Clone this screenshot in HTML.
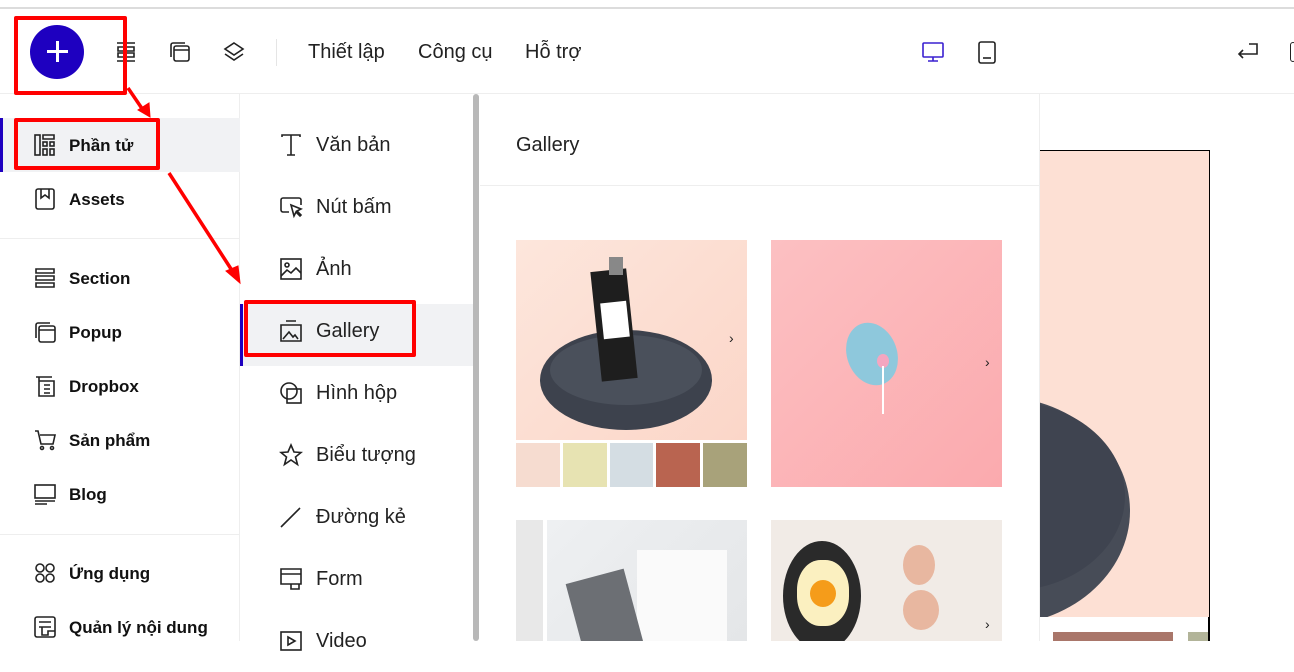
<!DOCTYPE html>
<html><head><meta charset="utf-8"><style>
*{box-sizing:border-box;margin:0;padding:0}
body{width:1294px;height:641px;overflow:hidden;background:#fff;font-family:"Liberation Sans",Roboto,sans-serif;color:#1f1f1f;position:relative}
.abs{position:absolute}
.topline{left:0;top:7px;width:1294px;height:2px;background:#dcdcdc}
.hdr{left:0;top:9px;width:1294px;height:85px;border-bottom:1px solid #eee}
.menu{font-size:20px;color:#222;top:41px}
.side{left:0;top:94px;width:240px;height:547px;border-right:1px solid #eee}
.si{position:absolute;left:0;width:240px;height:54px;display:flex;align-items:center;font-weight:bold;font-size:17px;color:#111}
.si svg{position:absolute;left:34px}
.si span{position:absolute;left:69px;top:18px}
.mi{position:absolute;left:240px;width:233px;height:62px;display:flex;align-items:center;font-size:20px;color:#222}
.mi svg{position:absolute;left:39px}
.mi span{position:absolute;left:76px;top:20px}
svg{fill:none;stroke:#222;stroke-width:1.6}
.red{position:absolute;border:4px solid #f00;border-radius:2px}
</style></head><body>
<div class="abs topline"></div>
<div class="abs hdr"></div>
<div class="abs" style="left:30px;top:25px;width:54px;height:54px;border-radius:50%;background:#1e00c0"></div>
<div class="abs" style="left:47px;top:50px;width:21px;height:3px;background:#fff"></div>
<div class="abs" style="left:56px;top:41px;width:3px;height:21px;background:#fff"></div>
<svg class="abs" style="left:114px;top:40px" width="24" height="24" viewBox="0 0 24 24"><path d="M3 3h18M3 21h18M4 7h16v4H4zM4 13h16v4H4z"/></svg>
<svg class="abs" style="left:168px;top:40px" width="24" height="24" viewBox="0 0 24 24"><rect x="6" y="6" width="15" height="15" rx="2"/><path d="M3 17V5a2 2 0 0 1 2-2h12M6 10h15"/></svg>
<svg class="abs" style="left:222px;top:40px" width="24" height="24" viewBox="0 0 24 24"><path d="M12 3l9 6-9 6-9-6zM3 14l9 6 9-6"/></svg>
<div class="abs" style="left:276px;top:39px;width:1px;height:27px;background:#e5e5e5"></div>
<div class="abs menu" style="left:308px">Thiết lập</div>
<div class="abs menu" style="left:418px">Công cụ</div>
<div class="abs menu" style="left:525px">Hỗ trợ</div>
<svg class="abs" style="left:921px;top:40px" width="24" height="24" viewBox="0 0 24 24"><rect x="2" y="3" width="20" height="14" rx="1" stroke="#3a20d0"/><path d="M12 17v4M7 21h10" stroke="#3a20d0"/></svg>
<svg class="abs" style="left:975px;top:40px" width="24" height="24" viewBox="0 0 24 24"><rect x="4" y="2" width="16" height="21" rx="2"/><path d="M8 18h8"/></svg>
<svg class="abs" style="left:1236px;top:40px" width="24" height="24" viewBox="0 0 24 24"><path d="M7 18l-4-4 4-4M3 14h18V4h-8"/></svg>
<div class="abs" style="left:1290px;top:42px;width:6px;height:20px;border:1.6px solid #222;border-radius:3px"></div>

<div class="abs side"></div>
<div class="abs" style="left:0;top:118px;width:240px;height:54px;background:#f1f2f4"></div>
<div class="abs" style="left:0;top:118px;width:3px;height:54px;background:#1e00c0"></div>
<div class="si" style="top:118px"><svg width="22" height="22" viewBox="0 0 22 22"><rect x="1" y="1" width="5" height="20"/><path d="M9 1h11v4H9z"/><rect x="9" y="8" width="4" height="4"/><rect x="16" y="8" width="4" height="4"/><rect x="9" y="15" width="4" height="6"/><rect x="16" y="15" width="4" height="6"/></svg><span>Phần tử</span></div>
<div class="si" style="top:172px"><svg width="22" height="22" viewBox="0 0 22 22"><rect x="2" y="1" width="18" height="20" rx="2"/><path d="M7 1v9l4-3 4 3V1"/></svg><span>Assets</span></div>
<div class="abs" style="left:0;top:238px;width:240px;height:1px;background:#eee"></div>
<div class="si" style="top:251px"><svg width="22" height="22" viewBox="0 0 22 22"><path d="M2 2h18v4H2zM2 9h18v4H2zM2 16h18v4H2z"/></svg><span>Section</span></div>
<div class="si" style="top:305px"><svg width="22" height="22" viewBox="0 0 22 22"><rect x="5" y="5" width="16" height="16" rx="2"/><path d="M2 17V4a2 2 0 0 1 2-2h12M5 9h16"/></svg><span>Popup</span></div>
<div class="si" style="top:359px"><svg width="22" height="22" viewBox="0 0 22 22"><path d="M2 2h16M5 2v19h15V6H5M10 10h6M10 14h6M10 18h6"/></svg><span>Dropbox</span></div>
<div class="si" style="top:413px"><svg width="22" height="22" viewBox="0 0 22 22"><path d="M1 2h3l3 13h12l2-9H6"/><circle cx="8" cy="19" r="1.5"/><circle cx="18" cy="19" r="1.5"/></svg><span>Sản phẩm</span></div>
<div class="si" style="top:467px"><svg width="22" height="22" viewBox="0 0 22 22"><rect x="1" y="2" width="20" height="13"/><path d="M1 18h20M1 21h12"/></svg><span>Blog</span></div>
<div class="abs" style="left:0;top:534px;width:240px;height:1px;background:#eee"></div>
<div class="si" style="top:546px"><svg width="22" height="22" viewBox="0 0 22 22"><circle cx="6" cy="6" r="4"/><circle cx="16" cy="6" r="4"/><circle cx="6" cy="16" r="4"/><circle cx="16" cy="16" r="4"/></svg><span>Ứng dụng</span></div>
<div class="si" style="top:600px"><svg width="22" height="22" viewBox="0 0 22 22"><rect x="1" y="1" width="20" height="20" rx="2"/><path d="M5 6h12M5 11h12M8 11v8h6v-4h7"/></svg><span>Quản lý nội dung</span></div>

<div class="abs" style="left:473px;top:94px;width:6px;height:547px;background:#b8b8b8;border-radius:3px"></div>
<div class="abs" style="left:240px;top:304px;width:233px;height:62px;background:#f1f2f4"></div>
<div class="abs" style="left:240px;top:304px;width:3px;height:62px;background:#1e00c0"></div>
<div class="mi" style="top:114px"><svg width="24" height="24" viewBox="0 0 24 24"><path d="M3 4V2h18v2M12 2v20M8 22h8"/></svg><span>Văn bản</span></div>
<div class="mi" style="top:176px"><svg width="24" height="24" viewBox="0 0 24 24"><path d="M10 17H4a2 2 0 0 1-2-2V5a2 2 0 0 1 2-2h16a2 2 0 0 1 2 2v5"/><path d="M12 10l3 11 2-4 4 4 1-1-4-4 4-2z"/></svg><span>Nút bấm</span></div>
<div class="mi" style="top:238px"><svg width="24" height="24" viewBox="0 0 24 24"><rect x="2" y="2" width="20" height="20"/><circle cx="8" cy="8" r="2"/><path d="M2 19l6-6 4 3 5-5 5 5"/></svg><span>Ảnh</span></div>
<div class="mi" style="top:300px"><svg width="24" height="24" viewBox="0 0 24 24"><path d="M7 2h10M2 6h20v16H2z"/><path d="M4 20l6-7 4 5 2-2 3 4"/></svg><span>Gallery</span></div>
<div class="mi" style="top:362px"><svg width="24" height="24" viewBox="0 0 24 24"><circle cx="10" cy="10" r="8"/><rect x="8" y="8" width="14" height="14"/></svg><span>Hình hộp</span></div>
<div class="mi" style="top:424px"><svg width="24" height="24" viewBox="0 0 24 24"><path d="M12 2l3 7 7 .5-5.5 4.5 2 7.5L12 17l-6.5 4.5 2-7.5L2 9.5 9 9z"/></svg><span>Biểu tượng</span></div>
<div class="mi" style="top:486px"><svg width="24" height="24" viewBox="0 0 24 24"><path d="M2 22L21 3"/></svg><span>Đường kẻ</span></div>
<div class="mi" style="top:548px"><svg width="24" height="24" viewBox="0 0 24 24"><path d="M2 2h20v15H2zM2 7h20M12 17h8v5h-8z"/></svg><span>Form</span></div>
<div class="mi" style="top:610px"><svg width="24" height="24" viewBox="0 0 24 24"><rect x="2" y="3" width="20" height="18"/><path d="M9 8l7 4-7 4z"/></svg><span>Video</span></div>

<div class="abs" style="left:516px;top:134px;font-size:20px;color:#222">Gallery</div>
<div class="abs" style="left:480px;top:185px;width:560px;height:1px;background:#eee"></div>
<div class="abs" style="left:1039px;top:94px;width:1px;height:547px;background:#eee"></div>

<!-- gallery 1 -->
<div class="abs" style="left:516px;top:240px;width:231px;height:200px;overflow:hidden;background:linear-gradient(135deg,#fde6dc,#fbd6c8)">
  <div class="abs" style="left:24px;top:90px;width:172px;height:100px;border-radius:50%;background:#3d424d"></div>
  <div class="abs" style="left:34px;top:95px;width:152px;height:70px;border-radius:50%;background:#4a505b"></div>
  <div class="abs" style="left:80px;top:30px;width:36px;height:110px;background:#1e1e1e;transform:rotate(-6deg)"></div>
  <div class="abs" style="left:93px;top:17px;width:14px;height:18px;background:#888"></div>
  <div class="abs" style="left:86px;top:62px;width:26px;height:36px;background:#fff;transform:rotate(-6deg)"></div>
</div>
<div class="abs" style="left:729px;top:330px;font-size:14px">›</div>
<div class="abs" style="left:516px;top:443px;width:44px;height:44px;background:#f6dcd0"></div>
<div class="abs" style="left:563px;top:443px;width:44px;height:44px;background:#e7e3b2"></div>
<div class="abs" style="left:610px;top:443px;width:43px;height:44px;background:#d4dde3"></div>
<div class="abs" style="left:656px;top:443px;width:44px;height:44px;background:#b96450"></div>
<div class="abs" style="left:703px;top:443px;width:44px;height:44px;background:#a8a27a"></div>

<!-- gallery 2 -->
<div class="abs" style="left:771px;top:240px;width:231px;height:247px;background:linear-gradient(135deg,#fcc0c2,#fbaaae)"></div>
<div class="abs" style="left:847px;top:322px;width:50px;height:64px;border-radius:50%;background:#8ec8dc;transform:rotate(-20deg)"></div>
<div class="abs" style="left:877px;top:354px;width:12px;height:14px;border-radius:50%;background:#f4a6c0"></div>
<div class="abs" style="left:882px;top:366px;width:2px;height:48px;background:#fff"></div>
<div class="abs" style="left:985px;top:354px;font-size:14px">›</div>

<!-- row 2 -->
<div class="abs" style="left:516px;top:520px;width:27px;height:121px;background:#e8e8e8"></div>
<div class="abs" style="left:547px;top:520px;width:200px;height:121px;overflow:hidden;background:linear-gradient(135deg,#eef0f2,#e4e6e8)">
  <div class="abs" style="left:90px;top:30px;width:90px;height:100px;background:#fafafa"></div>
  <div class="abs" style="left:28px;top:55px;width:60px;height:80px;background:#6c6f74;transform:rotate(-15deg)"></div>
</div>
<div class="abs" style="left:771px;top:520px;width:231px;height:121px;overflow:hidden;background:#f1ebe6">
  <div class="abs" style="left:12px;top:21px;width:78px;height:110px;border-radius:50%;background:#2a2a2a"></div>
  <div class="abs" style="left:26px;top:40px;width:52px;height:66px;border-radius:45%;background:#fbf0c0"></div>
  <div class="abs" style="left:39px;top:60px;width:26px;height:27px;border-radius:50%;background:#f59c1a"></div>
  <div class="abs" style="left:132px;top:25px;width:32px;height:40px;border-radius:50%;background:#e8b7a0"></div>
  <div class="abs" style="left:132px;top:70px;width:36px;height:40px;border-radius:50%;background:#e8b7a0"></div>
</div>
<div class="abs" style="left:985px;top:616px;font-size:14px">›</div>

<!-- canvas -->
<div class="abs" style="left:1040px;top:150px;width:170px;height:467px;overflow:hidden;background:#fde0d4;border-top:1px solid #000;border-right:1.5px solid #000">
  <div class="abs" style="left:-180px;top:245px;width:270px;height:230px;border-radius:50%;background:#474c57"></div>
  <div class="abs" style="left:-150px;top:250px;width:235px;height:190px;border-radius:50%;background:#3f4450"></div>
</div>
<div class="abs" style="left:1208px;top:617px;width:2px;height:24px;background:#000"></div>
<div class="abs" style="left:1053px;top:632px;width:120px;height:9px;background:#a9766a"></div>
<div class="abs" style="left:1188px;top:632px;width:20px;height:9px;background:#b2b499"></div>

<!-- annotations -->
<div class="red" style="left:14px;top:16px;width:113px;height:79px"></div>
<div class="red" style="left:14px;top:118px;width:146px;height:52px"></div>
<div class="red" style="left:244px;top:300px;width:172px;height:57px"></div>
<svg class="abs" style="left:0;top:0" width="300" height="300" viewBox="0 0 300 300"><path d="M128 88L143 110" stroke="#f00" stroke-width="3.5"/><path d="M138 110l12 7-1-14z" fill="#f00" stroke="#f00" stroke-width="1"/><path d="M169 173L233 272" stroke="#f00" stroke-width="3.5"/><path d="M226 271l14 12-2-17z" fill="#f00" stroke="#f00" stroke-width="1"/></svg>
</body></html>
